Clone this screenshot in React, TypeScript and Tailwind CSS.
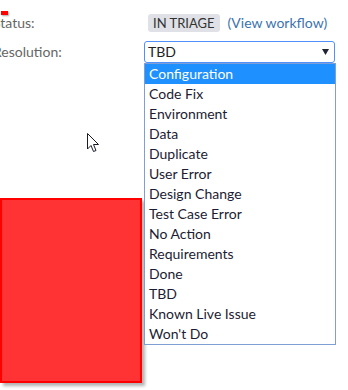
import React from "react";

const items = [
  "Configuration",
  "Code Fix",
  "Environment",
  "Data",
  "Duplicate",
  "User Error",
  "Design Change",
  "Test Case Error",
  "No Action",
  "Requirements",
  "Done",
  "TBD",
  "Known Live Issue",
  "Won't Do",
];

export default function App() {
  return (
    <div
      className="relative w-[348px] h-[390px] overflow-hidden bg-white text-[14px]"
      style={{ fontFamily: "Lato, 'Open Sans', sans-serif" }}
    >
      <div className="absolute left-[1px] top-[11px] w-[7px] h-[4px] bg-[#ff0000] shadow-[1px_1px_2px_rgba(0,0,0,0.35)]" />
      <div className="pt-[14px] -ml-[7px] grid grid-cols-[151px_192px] gap-y-[9px] items-center">
        <div className="text-[#666] leading-[18px]">Status:</div>
        <div className="flex items-center gap-[8px] pl-[4px]">
          <span className="h-[18px] px-[5px] rounded-[3px] bg-[#dfe1e6] text-[#333] text-[13px] leading-[18px]">
            IN TRIAGE
          </span>
          <span className="text-[#3b73af] leading-[18px]">(View workflow)</span>
        </div>
        <div className="text-[#666] leading-[22px]">Resolution:</div>
        <div className="relative">
          <div className="h-[22px] w-[191px] border border-[#4d90fe] rounded-[3px] flex items-center justify-between pl-[3px] pr-[5px] text-[#222]">
            <span className="leading-[20px]">TBD</span>
            <svg width="7" height="6" viewBox="0 0 7 6">
              <path d="M0 0 H7 L3.5 6 Z" fill="#1f2533" />
            </svg>
          </div>
          <div className="absolute left-0 top-[22px] w-[192px] border border-[#7f9fd4] bg-white text-[#1c1c33]">
            {items.map((it, i) => (
              <div
                key={it}
                className={
                  i === 0
                    ? "h-[20px] leading-[20px] pl-[4px] bg-[#1e90ff] text-white"
                    : "h-[20px] leading-[20px] pl-[4px]"
                }
              >
                {it}
              </div>
            ))}
          </div>
        </div>
      </div>
      <div className="mt-[135px] w-[142px] h-[185px] bg-[#ff3333] border-2 border-[#ff0000] shadow-[3px_3px_3px_rgba(0,0,0,0.3)]" />
      <svg
        className="absolute left-[87px] top-[133px]"
        width="13"
        height="20"
        viewBox="0 0 13 20"
      >
        <path
          d="M0.5 0.5 L0.5 16 L4 12.5 L6.5 18.5 L9 17.5 L6.5 11.5 L11.5 11.5 Z"
          fill="white"
          stroke="#1a1a2a"
          strokeWidth="1"
          strokeLinejoin="round"
        />
      </svg>
    </div>
  );
}
